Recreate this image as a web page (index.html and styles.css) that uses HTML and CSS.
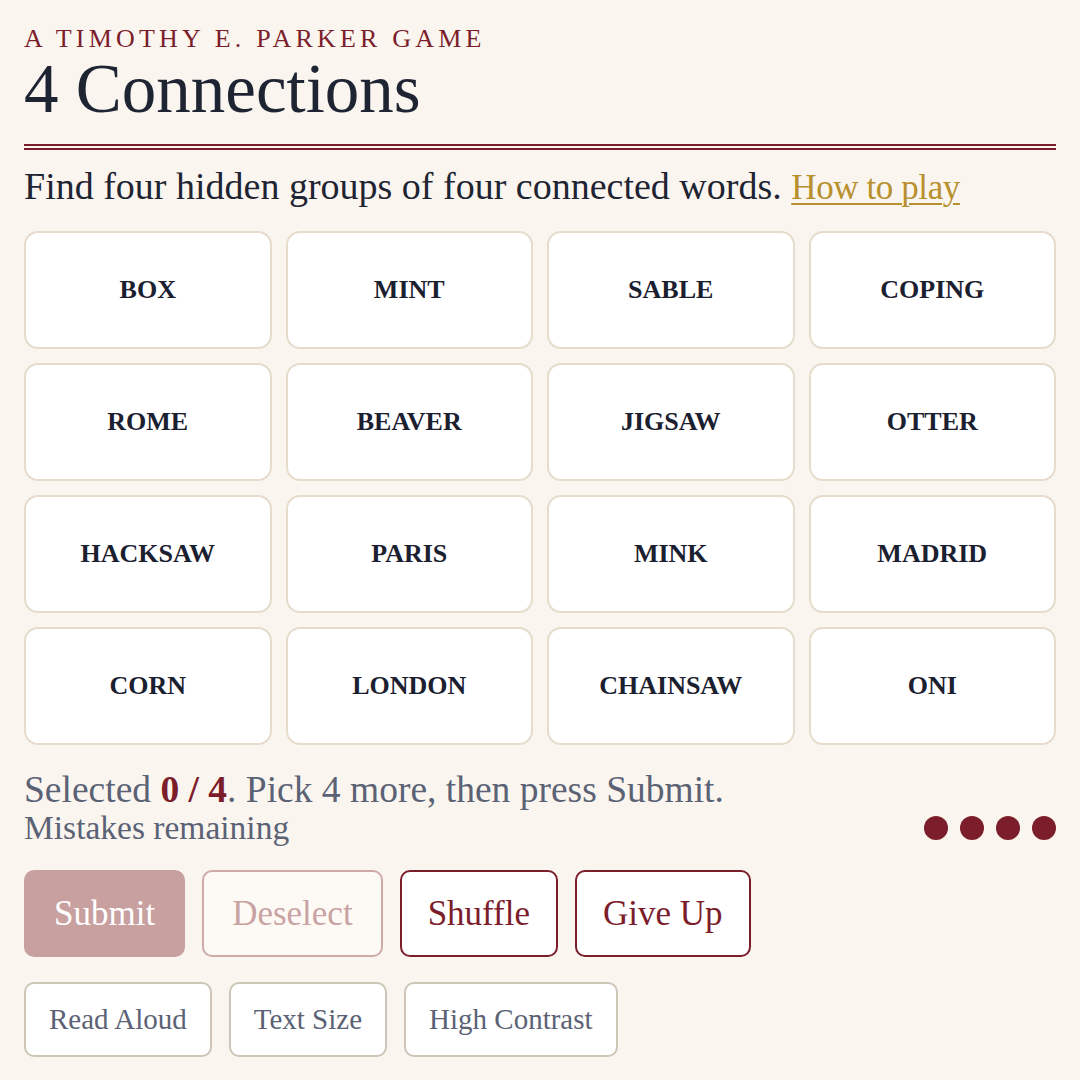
FILE: index.html
```html
<!DOCTYPE html>
<html lang="en">
  <head>
    <meta charset="UTF-8" />
    <meta name="viewport" content="width=device-width, initial-scale=1.0" />
    <title>4 Connections</title>
    <link rel="stylesheet" href="styles.css">
  </head>
  <body>
    <main class="game">
      <header class="game-header">
        <p class="kicker">A Timothy E. Parker Game</p>
        <h1>4 Connections</h1>
      </header>

      <p class="intro">Find four hidden groups of four connected words. <a href="#" class="help-link">How to play</a></p>

      <!-- Сетка слов -->
      <div class="board">
        <button class="tile">BOX</button>
        <button class="tile">MINT</button>
        <button class="tile">SABLE</button>
        <button class="tile">COPING</button>
        <button class="tile">ROME</button>
        <button class="tile">BEAVER</button>
        <button class="tile">JIGSAW</button>
        <button class="tile">OTTER</button>
        <button class="tile">HACKSAW</button>
        <button class="tile">PARIS</button>
        <button class="tile">MINK</button>
        <button class="tile">MADRID</button>
        <button class="tile">CORN</button>
        <button class="tile">LONDON</button>
        <button class="tile">CHAINSAW</button>
        <button class="tile">ONI</button>
      </div>

      <p class="status">Selected <strong>0 / 4</strong>. Pick 4 more, then press Submit.</p>
      <div class="mistakes">
        <span>Mistakes remaining</span>
        <div class="dots">
          <span class="dot"></span>
          <span class="dot"></span>
          <span class="dot"></span>
          <span class="dot"></span>
        </div>
      </div>

      <div class="controls">
        <button class="btn btn-submit" disabled>Submit</button>
        <button class="btn btn-muted" disabled>Deselect</button>
        <button class="btn btn-outline">Shuffle</button>
        <button class="btn btn-outline">Give Up</button>
      </div>

      <!-- Доступность -->
      <div class="tools">
        <button class="tool-btn">Read Aloud</button>
        <button class="tool-btn">Text Size</button>
        <button class="tool-btn">High Contrast</button>
      </div>
    </main>
  </body>
</html>
```

FILE: styles.css
```css
body {
  margin: 0;
  background-color: #faf6ef;
  font-family: "Liberation Serif", "Times New Roman", serif;
  color: #1f2433;
}

.game {
  padding: 24px 24px 0;
}

.kicker {
  margin: 0;
  font-size: 26px;
  line-height: 30px;
  letter-spacing: 4.2px;
  text-transform: uppercase;
  color: #7c1d2b;
}

.game-header h1 {
  margin: 0;
  font-size: 69px;
  line-height: 70px;
  font-weight: normal;
  padding-bottom: 20px;
  border-bottom: 6px double #7c1d2b;
}

.intro {
  margin: 16px 0 0;
  font-size: 38px;
  line-height: 40px;
}

.help-link {
  color: #b8902e;
  font-size: 35px;
  line-height: 30px;
  letter-spacing: -0.4px;
  text-decoration: underline;
  text-underline-offset: 4px;
  text-decoration-thickness: 2px;
}

.board {
  margin-top: 25px;
  display: grid;
  grid-template-columns: repeat(4, 1fr);
  grid-auto-rows: 118px;
  gap: 14px;
}

.tile {
  background-color: #ffffff;
  border: 2px solid #e6dccb;
  border-radius: 14px;
  font-family: "Liberation Serif", "Times New Roman", serif;
  font-weight: bold;
  font-size: 26px;
  color: #1b2030;
  cursor: pointer;
}

.status {
  margin: 25px 0 0;
  font-size: 37.5px;
  line-height: 40px;
  color: #5b6275;
}

.status strong {
  color: #7c1d2b;
}

.mistakes {
  display: flex;
  justify-content: space-between;
  align-items: center;
  font-size: 33.5px;
  line-height: 36px;
  color: #5b6275;
}

.dots {
  display: flex;
  gap: 12px;
}

.dot {
  width: 24px;
  height: 24px;
  border-radius: 50%;
  background-color: #7c1d2b;
}

.controls {
  margin-top: 24px;
  display: flex;
  gap: 17px;
}

.btn {
  height: 87px;
  padding: 0 28px;
  border-radius: 10px;
  border: 2px solid #7c1d2b;
  background-color: #ffffff;
  color: #7c1d2b;
  font-family: "Liberation Serif", "Times New Roman", serif;
  font-size: 35px;
  cursor: pointer;
}

.btn-outline {
  padding: 0 26px;
}

.btn-submit {
  background-color: #c8a09f;
  border-color: #c8a09f;
  color: #ffffff;
}

.btn-muted {
  background-color: #fdfaf6;
  border-color: #cfa9a7;
  color: #c9a3a2;
}

.tools {
  margin-top: 25px;
  display: flex;
  gap: 17px;
}

.tool-btn {
  height: 75px;
  padding: 0 23px;
  border-radius: 10px;
  border: 2px solid #cdc6b6;
  background-color: #ffffff;
  color: #5b6275;
  font-family: "Liberation Serif", "Times New Roman", serif;
  font-size: 29px;
  cursor: pointer;
}
```
